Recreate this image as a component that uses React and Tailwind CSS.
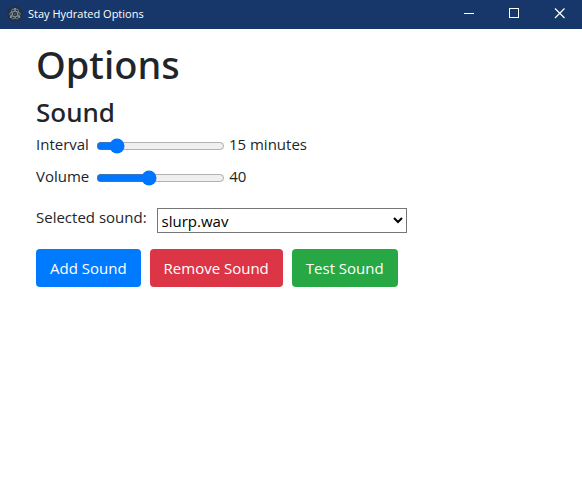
import { useState } from "react";

function ElectronIcon() {
  return (
    <svg className="size-4 shrink-0" viewBox="0 0 16 16" fill="none" aria-hidden="true">
      <circle cx="8" cy="8" r="7.8" fill="#2b2e3b" />
      <g stroke="#8fb3bf" strokeWidth="0.6">
        <ellipse cx="8" cy="8" rx="5.4" ry="2.5" />
        <ellipse cx="8" cy="8" rx="5.4" ry="2.5" transform="rotate(60 8 8)" />
        <ellipse cx="8" cy="8" rx="5.4" ry="2.5" transform="rotate(120 8 8)" />
      </g>
      <g fill="#a9c9d3">
        <circle cx="8" cy="8" r="0.6" />
        <circle cx="3.6" cy="11" r="0.8" />
        <circle cx="12.4" cy="11" r="0.8" />
        <circle cx="8" cy="2.8" r="0.8" />
      </g>
    </svg>
  );
}

function WindowButton({ label, children }) {
  return (
    <button type="button" aria-label={label} className="flex h-[27px] w-[45px] items-center justify-center">
      <svg className="size-[11px]" viewBox="0 0 11 11" fill="none" stroke="#ffffff" aria-hidden="true">
        {children}
      </svg>
    </button>
  );
}

function TitleBar() {
  return (
    <header className="flex h-[29px] items-start justify-between overflow-hidden bg-[#17376b] text-white">
      <div className="flex h-7 items-center gap-[5px] pl-[7px]">
        <ElectronIcon />
        <span className="text-[11px] leading-4">Stay Hydrated Options</span>
      </div>
      <div className="flex">
        <WindowButton label="Minimize">
          <path d="M0 5.5H10" />
        </WindowButton>
        <WindowButton label="Maximize">
          <rect x="0.5" y="0.5" width="9" height="9" />
        </WindowButton>
        <WindowButton label="Close">
          <path d="M1 0.5L10.5 10M10.5 0.5L1 10" strokeWidth="1.2" />
        </WindowButton>
      </div>
    </header>
  );
}

function SliderRow({ id, label, min, max, value, onChange, unit }) {
  return (
    <div className="flex h-6 items-start">
      <label htmlFor={id}>{label}</label>
      <input
        id={id}
        type="range"
        min={min}
        max={max}
        value={value}
        onChange={(e) => onChange(Number(e.target.value))}
        className="mt-[6px] mr-1 ml-[7px] h-4 w-[129px] accent-[#0075ff]"
      />
      <output htmlFor={id}>
        {value}
        {unit}
      </output>
    </div>
  );
}

function ActionButton({ className, children }) {
  return (
    <button type="button" className={"h-[38px] rounded px-[14px] text-white " + className}>
      {children}
    </button>
  );
}

export default function App() {
  const [interval, setInterval] = useState(15);
  const [volume, setVolume] = useState(40);

  return (
    <div className="min-h-screen bg-white font-['Open_Sans',sans-serif] text-[15px] leading-6 text-[#212529]">
      <TitleBar />
      <main className="px-9 pt-[11px]">
        <h1 className="mb-2 font-['Noto_Sans',sans-serif] text-[38px] leading-12 font-medium">Options</h1>
        <h2 className="mb-1 font-['Noto_Sans',sans-serif] text-[26px] leading-8 font-medium">Sound</h2>
        <div className="flex flex-col gap-2">
          <SliderRow id="interval" label="Interval" min={5} max={90} value={interval} onChange={setInterval} unit=" minutes" />
          <SliderRow id="volume" label="Volume" min={0} max={100} value={volume} onChange={setVolume} unit="" />
        </div>
        <div className="mt-[17px] flex items-start gap-[10px]">
          <label htmlFor="sound">Selected sound:</label>
          <select id="sound" className="mt-[3px] h-[25px] w-[250px] appearance-auto border border-[#767676] bg-white text-black">
            <option>slurp.wav</option>
          </select>
        </div>
        <div className="mt-4 flex gap-[9px]">
          <ActionButton className="bg-[#007bff]">Add Sound</ActionButton>
          <ActionButton className="bg-[#dc3545]">Remove Sound</ActionButton>
          <ActionButton className="bg-[#28a745]">Test Sound</ActionButton>
        </div>
      </main>
    </div>
  );
}
